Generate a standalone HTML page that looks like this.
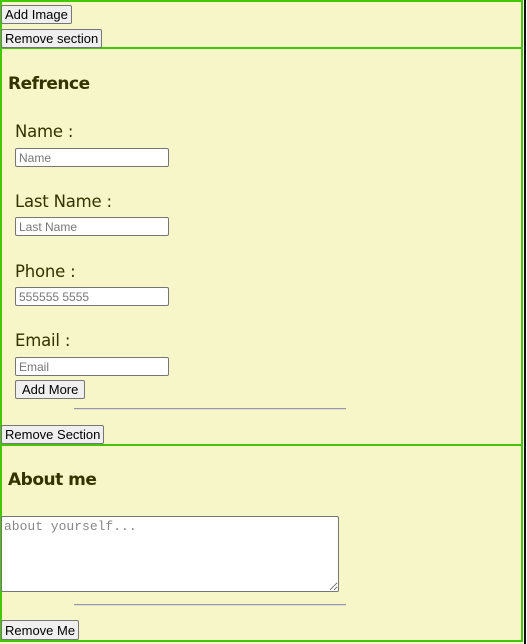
<!DOCTYPE html>
<html><head><style>
*{margin:0;padding:0;box-sizing:border-box}
body{width:527px;height:644px;background:#f7f6c8;position:relative;overflow:hidden;font-family:"DejaVu Sans",Verdana,sans-serif;color:#333300}
.a{position:absolute}
.g{position:absolute;background:#46c60a}
button{position:absolute;font-family:"Liberation Sans",Arial,sans-serif;font-size:13px;color:#000;background:#efefef;border:1px solid #767676;border-radius:2px;height:19px;padding:0 3px;line-height:17px}
input{position:absolute;left:15px;width:154px;height:19px;border:1px solid #767676;border-radius:2px;background:#fff;font-family:"Liberation Sans",Arial,sans-serif;font-size:12px;padding:0 3px}
input::placeholder{color:#777}
.lab{position:absolute;left:15px;font-size:16.5px;color:#333300;letter-spacing:-0.2px}
h3{position:absolute;left:8px;font-size:17px;font-weight:bold;color:#333300;letter-spacing:-0.5px}
.hr{position:absolute;left:74px;width:272px;height:2px;border-top:1px solid #999;border-bottom:1px solid #ddd}
textarea{position:absolute;left:1px;top:516px;width:338px;height:76px;border:1px solid #767676;border-radius:2px;background:#fff;font-family:"Liberation Mono",monospace;font-size:13px;padding:2px;resize:both}
textarea::placeholder{color:#888}
</style></head><body>
<div class="g" style="left:0;top:0;width:523px;height:2px"></div>
<div class="g" style="left:0;top:0;width:2px;height:642px"></div>
<div class="g" style="left:521px;top:0;width:2px;height:642px"></div>
<div class="g" style="left:0;top:47px;width:523px;height:2px"></div>
<div class="g" style="left:0;top:444px;width:523px;height:2px"></div>
<div class="g" style="left:0;top:640px;width:523px;height:2px"></div>
<div class="a" style="left:523px;top:0;width:4px;height:644px;background:#fff"></div>
<div class="a" style="left:524px;top:0;width:2px;height:644px;background:#111"></div>

<button style="left:1px;top:5px">Add Image</button>
<button style="left:1px;top:29px">Remove section</button>

<h3 style="top:74px">Refrence</h3>
<div class="lab" style="top:122px">Name :</div>
<input style="top:148px" placeholder="Name">
<div class="lab" style="top:192px">Last Name :</div>
<input style="top:217px" placeholder="Last Name">
<div class="lab" style="top:262px">Phone :</div>
<input style="top:287px" placeholder="555555 5555">
<div class="lab" style="top:331px">Email :</div>
<input style="top:357px" placeholder="Email">
<button style="left:15px;top:380px;padding:0 6px">Add More</button>
<div class="hr" style="top:408px"></div>
<button style="left:1px;top:425px">Remove Section</button>

<h3 style="top:470px">About me</h3>
<textarea placeholder="about yourself..."></textarea>
<div class="hr" style="top:604px"></div>
<button style="left:1px;top:620px;height:20px">Remove Me</button>
</body></html>
